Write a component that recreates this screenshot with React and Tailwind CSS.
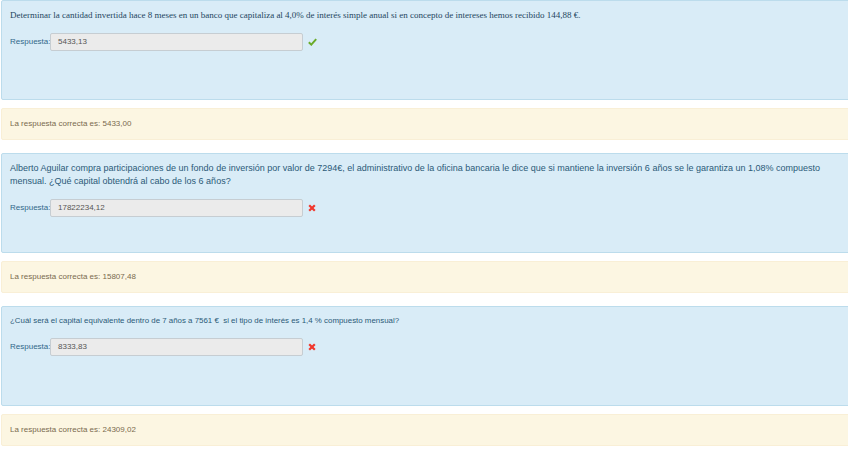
import React from 'react'

const questions = [
  {
    text: 'Determinar la cantidad invertida hace 8 meses en un banco que capitaliza al 4,0% de interés simple anual si en concepto de intereses hemos recibido 144,88 €.',
    textClass: "font-['Liberation_Serif',serif] text-[9px] leading-[13px] text-[#24465e]",
    answer: '5433,13',
    ok: true,
    correct: '5433,00',
  },
  {
    text: 'Alberto Aguilar compra participaciones de un fondo de inversión por valor de 7294€, el administrativo de la oficina bancaria le dice que si mantiene la inversión 6 años se le garantiza un 1,08% compuesto mensual. ¿Qué capital obtendrá al cabo de los 6 años?',
    textClass: 'text-[9px] leading-[13px] text-[#2b5a78]',
    answer: '17822234,12',
    ok: false,
    correct: '15807,48',
  },
  {
    text: '¿Cuál será el capital equivalente dentro de 7 años a 7561 €\u00a0 si el tipo de interés es 1,4 % compuesto mensual?',
    textClass: 'text-[7.9px] leading-[12px] text-[#2b5a78]',
    answer: '8333,83',
    ok: false,
    correct: '24309,02',
  },
]

function Check() {
  return (
    <svg width="9" height="8" viewBox="0 0 9 8" className="ml-[5px]">
      <path d="M0.8 4.2 L3.3 6.6 L8.2 1.2" fill="none" stroke="#6aab2a" strokeWidth="2" />
    </svg>
  )
}

function Cross() {
  return (
    <svg width="8" height="8" viewBox="0 0 8 8" className="ml-[5px]">
      <path d="M1.2 1.2 L6.8 6.8 M6.8 1.2 L1.2 6.8" fill="none" stroke="#f0372d" strokeWidth="2.2" />
    </svg>
  )
}

function Question({ q, first }) {
  return (
    <div className={first ? '' : 'mt-[13px]'}>
      <div className="h-[100px] border border-[#bcdcec] bg-[#d9ecf7] rounded-[2px] pl-[8px] pr-[20px] pt-[8px]">
        <p className={q.textClass}>{q.text}</p>
        <div className="flex items-center mt-[11px]">
          <span className="text-[8px] text-[#31688a] w-[40px]">Respuesta:</span>
          <div className="w-[253px] h-[18px] bg-[#ebebeb] border border-[#c6cdd2] rounded-[2px] flex items-center pl-[7px] text-[8px] text-[#555]">
            {q.answer}
          </div>
          {q.ok ? <Check /> : <Cross />}
        </div>
      </div>
      <div className="mt-[8px] h-[32px] border border-[#f9efd6] bg-[#fcf6e2] rounded-[2px] pl-[8px] flex items-center text-[8px] text-[#7a6a4e]">
        La respuesta correcta es: {q.correct}
      </div>
    </div>
  )
}

export default function App() {
  return (
    <div className="w-[848px] h-[458px] overflow-hidden bg-white font-['Liberation_Sans',Arial,sans-serif]">
      <div className="ml-px w-[860px]">
        {questions.map((q, i) => (
          <Question key={i} q={q} first={i === 0} />
        ))}
      </div>
    </div>
  )
}
